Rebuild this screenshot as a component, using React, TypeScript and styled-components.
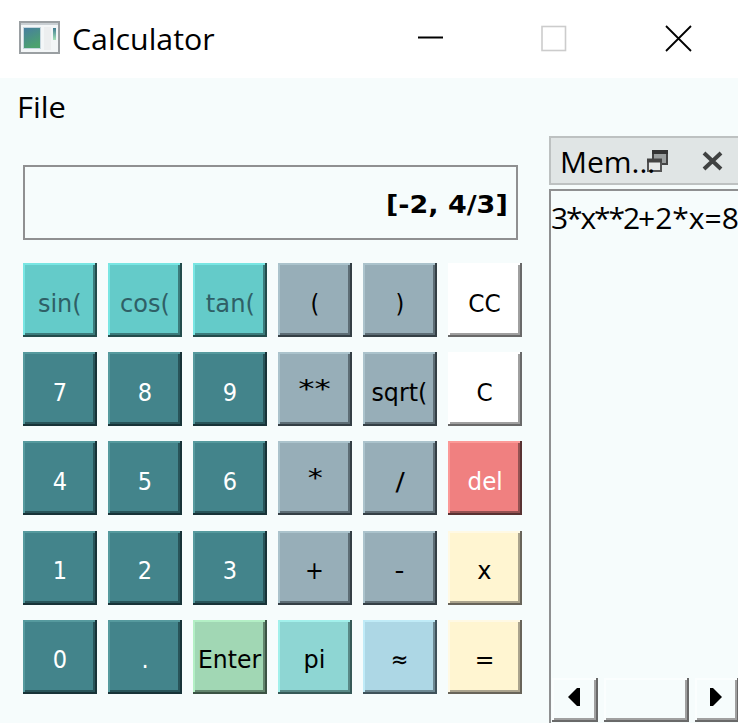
import React from 'react';
import styled, { createGlobalStyle } from 'styled-components';

const GlobalStyle = createGlobalStyle`
  * { box-sizing: border-box; }
  body { margin: 0; overflow: hidden; background: #f6fcfc; }
`;

const Window = styled.div`
  width: 738px;
  height: 723px;
  display: flex;
  flex-direction: column;
  overflow: hidden;
  background: #f6fcfc;
  color: #000;
  font-family: 'Open Sans', 'Noto Sans', sans-serif;
  white-space: nowrap;
`;

const TitleBar = styled.header`
  height: 78px;
  flex: none;
  display: flex;
  align-items: center;
  padding-left: 19px;
  background: #fff;
`;

const AppIcon = styled.svg`
  width: 41px;
  height: 33px;
  margin-top: -4px;
  flex: none;
`;

const Title = styled.h1`
  margin: 0 0 0 12px;
  width: 345px;
  font-size: 30px;
  font-weight: 400;
  line-height: 78px;
`;

const Label = styled.span<{ $stretch: number; $origin?: string; $raise?: number }>`
  display: inline-block;
  transform: translateY(${p => -(p.$raise ?? 0)}px) scaleX(${p => p.$stretch});
  transform-origin: ${p => p.$origin ?? 'left'} center;
`;

const Controls = styled.svg`
  width: 275px;
  height: 27px;
  flex: none;
  margin-top: -2px;
`;

const Body = styled.div`
  flex: 1;
  display: flex;
  min-height: 0;
`;

const Main = styled.main`
  width: 549px;
  flex: none;
  padding-left: 23px;
`;

const MenuBar = styled.nav`
  height: 87px;
  margin-left: -6px;
  font-size: 30px;
  line-height: 58px;
`;

const Display = styled.div`
  width: 495px;
  height: 75px;
  border: 2px solid #8f9091;
  padding-right: 8px;
  text-align: right;
  font: bold 25px/76px 'DejaVu Sans', sans-serif;
`;

const Keypad = styled.div`
  margin-top: 23px;
  display: grid;
  grid-template-columns: repeat(6, 74px);
  grid-auto-rows: 74px;
  gap: 15.2px 10.95px;
`;

type Tone = 'trig' | 'num' | 'op' | 'plain' | 'del' | 'cream' | 'enter' | 'pi' | 'approx';

const tones: Record<Tone, { bg: string; fg: string; light: string; inner: string; outer: string }> = {
  trig: { bg: '#64cbc9', fg: '#2f5f66', light: '#79e6e3', inner: '#3b7b7b', outer: '#234c4c' },
  num: { bg: '#43848b', fg: '#fff', light: '#569a9e', inner: '#285459', outer: '#183338' },
  op: { bg: '#97aeb8', fg: '#000', light: '#abc3cc', inner: '#5d6d75', outer: '#343f45' },
  plain: { bg: '#fff', fg: '#000', light: '#fff', inner: '#a0a0a0', outer: '#696969' },
  del: { bg: '#f08080', fg: '#fff', light: '#fb9997', inner: '#955252', outer: '#583232' },
  cream: { bg: '#fff5d1', fg: '#000', light: '#fff9e4', inner: '#aaa38d', outer: '#68645a' },
  enter: { bg: '#a1d7b4', fg: '#000', light: '#b3efc5', inner: '#62856d', outer: '#3b5344' },
  pi: { bg: '#8ed6d3', fg: '#000', light: '#a2f0eb', inner: '#588986', outer: '#365957' },
  approx: { bg: '#add7e5', fg: '#000', light: '#c0ebf7', inner: '#6d8993', outer: '#3f525a' },
};

const Key = styled.button<{ $tone: Tone }>`
  display: flex;
  align-items: center;
  justify-content: center;
  padding: 6px 0 0;
  overflow: hidden;
  border: 0;
  font: 25px/1 'DejaVu Sans', sans-serif;
  background: ${p => tones[p.$tone].bg};
  color: ${p => tones[p.$tone].fg};
  box-shadow:
    inset -2px -2px ${p => tones[p.$tone].outer},
    inset 2px 2px ${p => tones[p.$tone].light},
    inset -4px -4px ${p => tones[p.$tone].inner};
`;

const keys: [string, Tone, number?, number?][] = [
  ['sin(', 'trig', 0.96], ['cos(', 'trig', 0.96], ['tan(', 'trig', 0.97], ['(', 'op'], [')', 'op'], ['CC', 'plain', 0.93],
  ['7', 'num'], ['8', 'num'], ['9', 'num'], ['**', 'op', 1.3, 4], ['sqrt(', 'op', 0.95], ['C', 'plain', 0.93],
  ['4', 'num'], ['5', 'num'], ['6', 'num'], ['*', 'op', 1.2, 4], ['/', 'op', 1.1], ['del', 'del', 0.92],
  ['1', 'num'], ['2', 'num'], ['3', 'num'], ['+', 'op'], ['-', 'op', 1.1], ['x', 'cream', 0.96],
  ['0', 'num'], ['.', 'num'], ['Enter', 'enter', 0.94], ['pi', 'pi', 0.96], ['≈', 'approx', 0.84], ['=', 'cream', 0.94],
];

const Dock = styled.aside`
  flex: 1;
  min-width: 0;
  display: flex;
  flex-direction: column;
  padding-top: 58px;
`;

const DockHeader = styled.div`
  height: 49px;
  flex: none;
  display: flex;
  align-items: center;
  padding-left: 9px;
  overflow: hidden;
  border: 2px solid #bdc1c1;
  border-right: 0;
  background: #e0e5e5;
  font-size: 30px;
`;

const DockTitle = styled.span`
  width: 86px;
  flex: none;
  line-height: 45px;
  margin-top: 2px;
`;

const DockIcons = styled.svg`
  width: 80px;
  height: 28px;
  flex: none;
  margin-top: 2px;
`;

const History = styled.div`
  flex: 1;
  margin-top: 4px;
  display: flex;
  flex-direction: column;
  justify-content: space-between;
  overflow: hidden;
  border: 2px solid #8f9091;
  border-width: 2px 0 0 2px;
`;

const Entry = styled.div`
  font-size: 30px;
  line-height: 54px;
`;

const Power = styled.span`
  letter-spacing: -2.1px;
`;

const ScrollBar = styled.div`
  height: 45px;
  display: flex;
  gap: 6px;
  padding-left: 1px;
`;

const ScrollPart = styled.div<{ $width: number }>`
  width: ${p => p.$width}px;
  height: 44px;
  flex: none;
  display: flex;
  align-items: center;
  justify-content: center;
  box-shadow: inset -2px -2px #696969, inset 2px 2px #fbfefe, inset -4px -4px #a0a0a0;
`;

const Arrow = styled.svg`
  width: 12px;
  height: 19px;
  margin-right: 3px;
  margin-top: -6px;
`;

export default function App() {
  return (
    <>
      <GlobalStyle />
      <Window>
        <TitleBar>
          <AppIcon viewBox="0 0 41 33">
            <defs>
              <linearGradient id="pane" x1="0" y1="0" x2="0.4" y2="1">
                <stop offset="0" stopColor="#477ea0" />
                <stop offset="1" stopColor="#4ca26f" />
              </linearGradient>
              <linearGradient id="side" x1="0" y1="0" x2="0" y2="1">
                <stop offset="0" stopColor="#407c91" />
                <stop offset="1" stopColor="#a6e2b8" />
              </linearGradient>
            </defs>
            <rect x="1" y="1" width="39" height="31" fill="#f3f6f7" stroke="#9a9fa2" strokeWidth="2" />
            <path d="M2 3H39" stroke="#c9cfd3" strokeWidth="2" />
            <rect x="4" y="6" width="18" height="22" fill="#c6d7df" />
            <rect x="5" y="7" width="16" height="20" fill="url(#pane)" />
            <path d="M25 6H32V29H25Z" fill="#eceeef" />
            <rect x="34" y="7" width="3" height="12" fill="url(#side)" />
          </AppIcon>
          <Title><Label $stretch={1.01}>Calculator</Label></Title>
          <Controls viewBox="0 0 275 27" fill="none">
            <path d="M1 12.5H26" stroke="#000" strokeWidth="2" />
            <rect x="125" y="1.5" width="23.5" height="24" stroke="#ccc" strokeWidth="1.6" />
            <path d="M249 1L274 26M274 1L249 26" stroke="#000" strokeWidth="1.8" />
          </Controls>
        </TitleBar>
        <Body>
          <Main>
            <MenuBar><Label $stretch={1.03}>File</Label></MenuBar>
            <Display><Label $stretch={1.08} $origin="right">[-2, 4/3]</Label></Display>
            <Keypad>
              {keys.map(([text, tone, stretch, raise]) => (
                <Key key={text} $tone={tone}>
                  <Label $stretch={stretch ?? 0.9} $origin="center" $raise={raise}>{text}</Label>
                </Key>
              ))}
            </Keypad>
          </Main>
          <Dock>
            <DockHeader>
              <DockTitle><Label $stretch={1}>Mem...</Label></DockTitle>
              <DockIcons viewBox="0 0 80 28">
                <rect x="7" y="3" width="14" height="13" fill="#999d9d" stroke="#444" strokeWidth="2" />
                <path d="M6 4H22" stroke="#333" strokeWidth="4" />
                <rect x="2" y="12" width="13" height="11" fill="#e7eaea" stroke="#555" strokeWidth="2" />
                <path d="M1 12.5H16" stroke="#444" strokeWidth="4" />
                <path d="M58 5L75 21M75 5L58 21" stroke="#404242" strokeWidth="4" />
              </DockIcons>
            </DockHeader>
            <History>
              <Entry><Power>3*x**2</Power>+2*x=8</Entry>
              <ScrollBar>
                <ScrollPart $width={46}>
                  <Arrow viewBox="0 0 12 19"><path d="M12 0V18H9L0 9L9 0Z" /></Arrow>
                </ScrollPart>
                <ScrollPart $width={85} />
                <ScrollPart $width={44}>
                  <Arrow viewBox="0 0 12 19"><path d="M0 0V18H3L12 9L3 0Z" /></Arrow>
                </ScrollPart>
              </ScrollBar>
            </History>
          </Dock>
        </Body>
      </Window>
    </>
  );
}
